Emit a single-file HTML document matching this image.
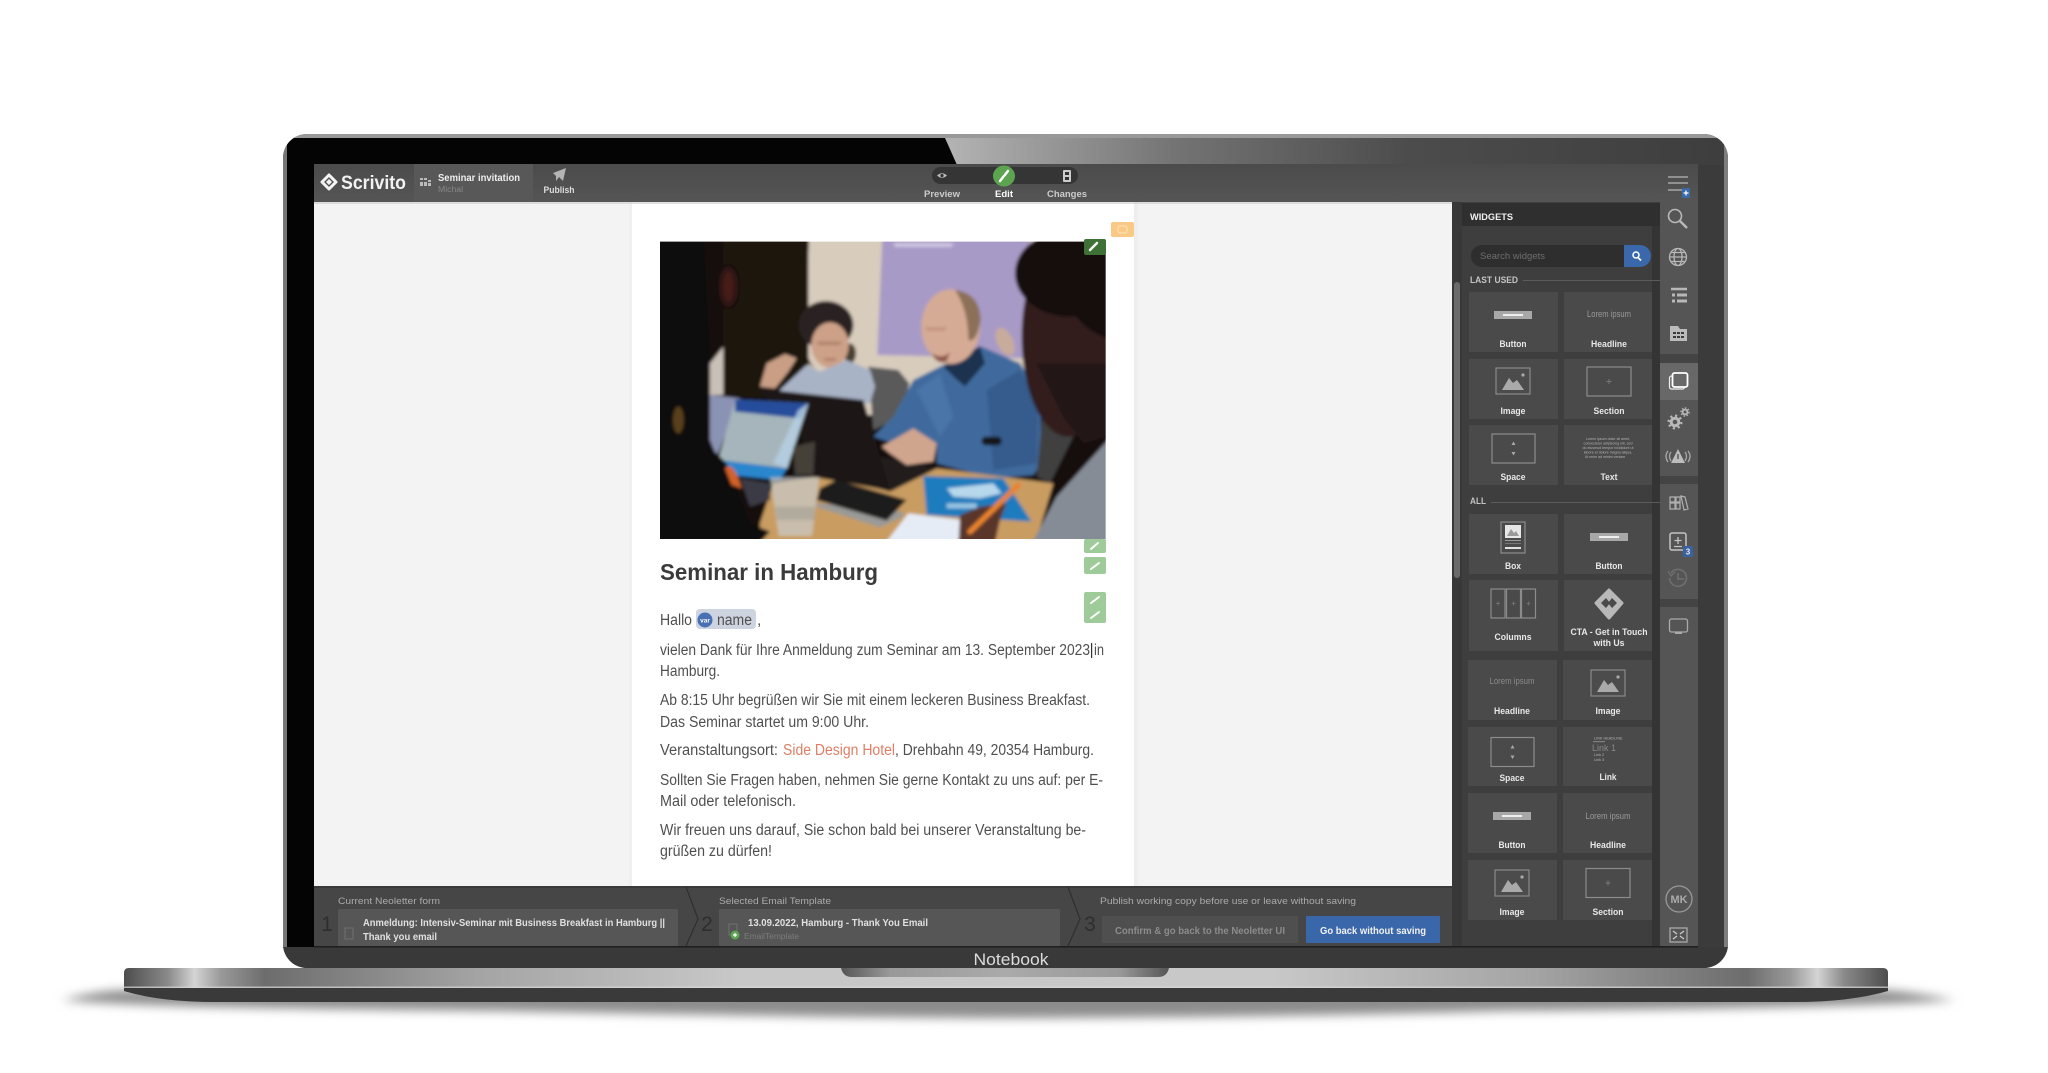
<!DOCTYPE html>
<html><head><meta charset="utf-8"><title>Scrivito Notebook</title>
<style>html,body{margin:0;padding:0;background:#fff;width:2048px;height:1073px;overflow:hidden}svg{display:block}text{font-family:"Liberation Sans",sans-serif}</style></head>
<body>
<svg width="2048" height="1073" viewBox="0 0 2048 1073" xmlns="http://www.w3.org/2000/svg">
<defs>
<linearGradient id="base" x1="124" x2="1888" y1="0" y2="0" gradientUnits="userSpaceOnUse">
<stop offset="0" stop-color="#4d4d4d"/><stop offset=".025" stop-color="#8a8a8a"/><stop offset=".04" stop-color="#d4d4d4"/><stop offset=".055" stop-color="#999"/><stop offset=".08" stop-color="#6d6d6d"/><stop offset=".2" stop-color="#a4a4a4"/><stop offset=".35" stop-color="#c8c8c8"/><stop offset=".65" stop-color="#c8c8c8"/><stop offset=".8" stop-color="#a4a4a4"/><stop offset=".92" stop-color="#6d6d6d"/><stop offset=".945" stop-color="#999"/><stop offset=".96" stop-color="#d4d4d4"/><stop offset=".975" stop-color="#8a8a8a"/><stop offset="1" stop-color="#4d4d4d"/>
</linearGradient>
<linearGradient id="gloss" x1="945" x2="1720" y1="0" y2="0" gradientUnits="userSpaceOnUse"><stop offset="0" stop-color="#b4b4b4"/><stop offset=".3" stop-color="#737373"/><stop offset=".6" stop-color="#4c4c4c"/><stop offset="1" stop-color="#3e3e3e"/></linearGradient>
<linearGradient id="notch" x1="841" x2="1169" y1="0" y2="0" gradientUnits="userSpaceOnUse"><stop offset="0" stop-color="#555"/><stop offset=".15" stop-color="#999"/><stop offset=".5" stop-color="#aaa"/><stop offset=".85" stop-color="#999"/><stop offset="1" stop-color="#555"/></linearGradient>
<linearGradient id="tb" x1="0" x2="0" y1="0" y2="1"><stop offset="0" stop-color="#4b4b4b"/><stop offset="1" stop-color="#555"/></linearGradient>
<filter id="b4" x="-10%" y="-80%" width="120%" height="360%"><feGaussianBlur stdDeviation="5"/></filter>
<filter id="soft" x="-5%" y="-5%" width="110%" height="110%"><feGaussianBlur stdDeviation="5"/></filter>
<filter id="soft8" x="-30%" y="-30%" width="160%" height="160%"><feGaussianBlur stdDeviation="9"/></filter>
<filter id="txt"><feGaussianBlur stdDeviation=".3"/></filter>
<clipPath id="ph"><rect x="0" y="35" width="1337" height="892"/></clipPath>
<clipPath id="lid"><rect x="283" y="134" width="1445" height="834" rx="24"/></clipPath>

<g id="iBtn"><rect x="-19" y="-4" width="38" height="8" fill="#a8a8a8"/><rect x="-10" y="-1" width="20" height="2" fill="#eee"/></g>
<g id="iImg"><rect x="-17" y="-13" width="34" height="26" fill="#4c4c4c" stroke="#8a8a8a" stroke-width="1.2"/><path d="M-11 9 L-4 -3 L0 2 L4 -1 L11 9Z" fill="#aaa"/><circle cx="10" cy="-6" r="1.6" fill="#aaa"/></g>
<g id="iSec"><rect x="-22" y="-14.500" width="44" height="29" fill="none" stroke="#8c8c8c" stroke-width="1.2"/><path d="M-2.500 0H2.500M0 -2.500V2.500" stroke="#777" stroke-width="1"/></g>
<g id="iSpc"><rect x="-21.500" y="-14.500" width="43" height="29" fill="none" stroke="#8c8c8c" stroke-width="1.2"/><path d="M0 -7 L-2 -3.500H2ZM0 7 L-2 3.500H2Z" fill="#aaa"/></g>
</defs>

<rect width="2048" height="1073" fill="#fff"/>

<!-- ground shadow -->
<path d="M62 1000 Q140 1008 500 1011 Q800 1017 1006 1018 Q1300 1017 1500 1011 Q1870 1008 1955 1000 Q1900 990 1880 990 H130 Q100 990 62 1000Z" fill="#8c8c8c" filter="url(#b4)"/>

<!-- base -->
<path d="M124 973 Q124 968 129 968 H1883 Q1888 968 1888 973 V988 H124Z" fill="url(#base)"/>
<rect x="124" y="986.500" width="1764" height="1.500" fill="#d8d8d8" opacity=".7"/>
<path d="M124 988 H1888 V991 Q1850 1002 1795 1002 H215 Q160 1002 124 991Z" fill="#3a3a3a"/>
<path d="M841 968 H1169 Q1167 977 1158 977 H852 Q843 977 841 968Z" fill="url(#notch)"/>

<!-- lid -->
<rect x="283" y="134" width="1445" height="834" rx="24" fill="#3b3b3b"/>
<g clip-path="url(#lid)">
<rect x="283" y="134" width="1445" height="4" fill="#999"/>
<rect x="283" y="134" width="4" height="834" fill="#777"/>
<rect x="1724" y="134" width="4" height="834" fill="#7d7d7d"/>
<rect x="945" y="138" width="779" height="27" fill="url(#gloss)"/>
<path d="M287 138 H945 L957 165 H314 V947 H287Z" fill="#040404"/>
<rect x="283" y="947" width="1445" height="21" fill="#393939"/>
</g>

<!-- page -->
<rect x="314" y="202" width="1138" height="685" fill="#f3f3f3"/>
<rect x="632" y="202" width="502" height="685" fill="#fff"/>
<rect x="629" y="202" width="3" height="685" fill="#efefef"/>
<rect x="1134" y="202" width="4" height="685" fill="#eeeeee"/>

<!-- orange / green tags -->
<rect x="1111" y="222" width="23" height="15" rx="2" fill="#f9c986"/>
<rect x="1118" y="226" width="9" height="7" rx="2" fill="none" stroke="#fde2b8" stroke-width="1"/>

<!-- photo -->
<g clip-path="url(#ph)" transform="translate(660,230) scale(.33333)">
<g filter="url(#soft)">
<rect x="-40" y="0" width="1420" height="970" fill="#140f0e"/>
<rect x="445" y="0" width="700" height="555" fill="#d8ccbd"/>
<path d="M668 0 H1110 V385 L652 375Z" fill="#a89ac6"/>
<path d="M190 0 H448 L440 220 L440 500 H190Z" fill="#1a1211"/>
<ellipse cx="205" cy="170" rx="22" ry="55" fill="#4a1f18" filter="url(#soft8)"/>
<path d="M150 400 L190 350 V495 H150Z" fill="#c9c0b8"/>
<!-- chair -->
<path d="M625 410 L715 420 L748 460 L725 560 L640 600Z" fill="#5a5a5a"/>
<!-- woman -->
<ellipse cx="498" cy="285" rx="82" ry="72" fill="#2a2320"/>
<path d="M425 300 Q440 400 470 420 L445 400Z" fill="#2a2320"/>
<ellipse cx="570" cy="370" rx="18" ry="30" fill="#4a4033"/>
<ellipse cx="510" cy="345" rx="56" ry="68" fill="#cda188"/>
<path d="M470 335 H545 L540 345 H475Z" fill="#8a5f4a" opacity=".45"/>
<path d="M490 385 H530 L525 392 H495Z" fill="#8e5a48" opacity=".6"/>
<path d="M360 480 L440 405 L480 425 L560 390 L630 420 L645 470 L630 520 H370Z" fill="#a9b3c6"/>
<path d="M300 470 L320 400 L375 372 L410 385 L385 425 L345 475Z" fill="#c99e85"/>
<!-- man shirt -->
<path d="M640 620 L700 560 L760 450 L850 405 L965 350 L1080 400 L1140 500 L1145 700 L1120 735 L1000 745 L830 700 L830 640 L700 640Z" fill="#406a9d"/>
<path d="M770 480 L840 430 L880 560 L840 620Z" fill="#4f7aac" opacity=".7"/>
<path d="M980 480 L1080 420 L1135 520 L1130 700 L1000 720Z" fill="#365b8c"/>
<path d="M850 410 L960 348 L975 400 L915 470 L880 440Z" fill="#1d3050"/>
<rect x="965" y="620" width="60" height="26" rx="12" fill="#13161c"/>
<!-- man head -->
<ellipse cx="872" cy="290" rx="88" ry="112" fill="#d6ab95"/>
<path d="M885 180 Q960 190 962 270 Q950 340 925 330 Q925 240 885 180Z" fill="#8c7058"/>
<path d="M795 292 H860 L855 302 H800Z" fill="#a87a62" opacity=".5"/>
<path d="M815 370 Q850 390 870 365 L860 395 Q830 405 815 370Z" fill="#8e5a48"/>
<ellipse cx="1035" cy="335" rx="24" ry="45" fill="#c7ab9b" transform="rotate(-25 1035 335)"/>
<!-- table -->
<path d="M300 880 L340 760 L500 735 L690 785 L830 715 L1180 760 L1120 960 H300Z" fill="#c99c62"/>
<!-- keyboard -->
<path d="M660 680 L830 715 L690 785Z" fill="#201f1f"/>
<!-- hand -->
<path d="M665 650 L760 595 L830 640 L820 695 L740 705 L690 670Z" fill="#d0a58e"/>
<!-- black laptop -->
<path d="M290 475 L610 510 L690 782 L455 740 L420 600Z" fill="#1a1919"/>
<!-- tablet -->
<path d="M150 495 L240 505 L170 680 L150 630Z" fill="#8b93b4"/>
<path d="M225 508 L445 520 L382 715 L175 690Z" fill="#a5b5bb"/>
<path d="M225 508 L445 520 L420 565 L225 545Z" fill="#254d9b"/>
<path d="M415 540 L445 520 L380 715 L340 700 Z" fill="#b7d1e6" opacity=".8"/>
<path d="M175 690 L380 715 L360 750 L210 735Z" fill="#2b86cd"/>
<path d="M240 745 L330 760 L330 810 L270 830Z" fill="#3a3a44"/>
<!-- glass -->
<path d="M400 650 L465 635 L460 735 L405 735Z" fill="#444038"/>
<!-- power strip -->
<path d="M470 820 L725 845 L730 860 L660 892 L468 830Z" fill="#9a9a98"/>
<path d="M480 775 L530 750 L740 810 L680 872 L470 810Z" fill="#1e1e1f"/>
<path d="M330 742 L478 742 L456 918 L356 918Z" fill="#c9cccb" opacity=".72"/>
<path d="M345 830 H465 V870 H350Z" fill="#8f8f86" opacity=".4"/>
<!-- notebook -->
<path d="M790 738 L1030 745 L1115 875 L800 855Z" fill="#1c7bbd"/>
<path d="M860 775 L1000 760 L1025 790 L960 805 L880 800Z" fill="#b7d8ec"/>
<path d="M860 820 H950 V835 H860Z" fill="#d0e6f3" opacity=".7"/>
<!-- paper -->
<path d="M660 960 L745 850 L905 870 L890 960Z" fill="#e6ecf6"/>
<!-- right person -->
<path d="M1105 960 L1190 800 L1380 590 V960Z" fill="#868c96"/>
<path d="M1130 740 L1150 520 L1240 620 L1170 760Z" fill="#3f3f3f"/>
<ellipse cx="1225" cy="320" rx="140" ry="300" fill="#311e1b"/>
<path d="M1380 610 L1270 640 L1210 560 L1130 400 L1380 400Z" fill="#241614"/>
<ellipse cx="1230" cy="130" rx="165" ry="130" fill="#131010"/>
<path d="M1240 0 H1380 V340 Q1260 300 1240 240Z" fill="#131010"/>
<!-- hand + pen -->
<path d="M895 960 L900 855 L960 830 L1040 820 L1020 870 L1000 960Z" fill="#5a3629"/>
<path d="M1075 765 L930 905" stroke="#e8832f" stroke-width="16" stroke-linecap="round"/>
<!-- foreground left -->
<path d="M-40 0 H130 L150 400 L140 640 L200 700 L270 880 L330 905 L280 960 H-40Z" fill="#0c0a0a"/>
<ellipse cx="55" cy="570" rx="16" ry="40" fill="#6e4d22" opacity=".8"/>
<path d="M195 715 Q215 695 235 745 L245 775 L215 765Z" fill="#d2622c"/>
<path d="M700 40 H880 L875 50 H705Z" fill="#e0dcef" opacity=".8"/>
</g>
</g>
<rect x="1084" y="239" width="22" height="16" rx="2" fill="#3f7035"/>
<path d="M1090 250 L1097 243" stroke="#f4f4f4" stroke-width="2.500" stroke-linecap="round"/>
<rect x="1084" y="539" width="22" height="14" rx="2" fill="#9ecb99"/>
<path d="M1091 549 L1098 543" stroke="#fff" stroke-width="2" stroke-linecap="round"/>
<rect x="1084" y="557" width="22" height="17" rx="2" fill="#9ecb99"/>
<path d="M1091 569 L1099 563" stroke="#fff" stroke-width="2" stroke-linecap="round"/>
<rect x="1084" y="592" width="22" height="31" rx="2" fill="#9ecb99"/>
<path d="M1091 603 L1099 597M1091 618 L1099 612" stroke="#fff" stroke-width="2" stroke-linecap="round"/>

<!-- content -->
<g fill="#505050" font-size="15.500" filter="url(#txt)">
<text x="660" y="580" font-size="23" font-weight="bold" fill="#3a3a3a" textLength="218" lengthAdjust="spacingAndGlyphs">Seminar in Hamburg</text>
<text x="660" y="625" textLength="32" lengthAdjust="spacingAndGlyphs">Hallo</text>
<rect x="696" y="609" width="60" height="20" rx="4" fill="#cdd4e0"/>
<circle cx="705" cy="620" r="7.500" fill="#4a6fb3"/>
<text x="705" y="622.500" font-size="6.500" font-weight="bold" fill="#fff" text-anchor="middle">var</text>
<text x="717" y="625" textLength="35" lengthAdjust="spacingAndGlyphs">name</text>
<text x="757" y="625">,</text>
<text x="660" y="655" textLength="430" lengthAdjust="spacingAndGlyphs">vielen Dank für Ihre Anmeldung zum Seminar am 13. September 2023</text>
<rect x="1091" y="643" width="1.200" height="15" fill="#333"/>
<text x="1094" y="655" textLength="10" lengthAdjust="spacingAndGlyphs">in</text>
<text x="660" y="676" textLength="60" lengthAdjust="spacingAndGlyphs">Hamburg.</text>
<text x="660" y="705" textLength="430" lengthAdjust="spacingAndGlyphs">Ab 8:15 Uhr begrüßen wir Sie mit einem leckeren Business Breakfast.</text>
<text x="660" y="727" textLength="209" lengthAdjust="spacingAndGlyphs">Das Seminar startet um 9:00 Uhr.</text>
<text x="660" y="755" textLength="118" lengthAdjust="spacingAndGlyphs">Veranstaltungsort:</text>
<text x="783" y="755" fill="#dd7f66" textLength="112" lengthAdjust="spacingAndGlyphs">Side Design Hotel</text>
<text x="895" y="755" textLength="199" lengthAdjust="spacingAndGlyphs">, Drehbahn 49, 20354 Hamburg.</text>
<text x="660" y="785" textLength="443" lengthAdjust="spacingAndGlyphs">Sollten Sie Fragen haben, nehmen Sie gerne Kontakt zu uns auf: per E-</text>
<text x="660" y="806" textLength="136" lengthAdjust="spacingAndGlyphs">Mail oder telefonisch.</text>
<text x="660" y="835" textLength="426" lengthAdjust="spacingAndGlyphs">Wir freuen uns darauf, Sie schon bald bei unserer Veranstaltung be-</text>
<text x="660" y="856" textLength="112" lengthAdjust="spacingAndGlyphs">grüßen zu dürfen!</text>
</g>

<!-- toolbar -->
<rect x="314" y="164" width="1384" height="38" fill="url(#tb)"/>
<rect x="414" y="164" width="119" height="38" fill="#585858"/>
<rect x="314" y="202" width="1138" height="2" fill="#ccc" opacity=".6"/>
<g fill="#f2f2f2">
<path d="M329 175 L336 182 L329 189 L322 182Z" fill="none" stroke="#f4f4f4" stroke-width="3" stroke-linejoin="round"/>
<path d="M326 182 L329 179 L332 182 L329 185Z" fill="#f4f4f4"/>
<text x="341" y="189" font-size="19" font-weight="bold" textLength="65" lengthAdjust="spacingAndGlyphs">Scrivito</text>
<text x="438" y="181" font-size="10" font-weight="bold" fill="#eee" textLength="82" lengthAdjust="spacingAndGlyphs">Seminar invitation</text>
<text x="438" y="192" font-size="8" fill="#888" textLength="25" lengthAdjust="spacingAndGlyphs">Michal</text>
<path d="M420 178h3v2h-3zM424 178h3v2h-3zM420 182h3v4h-3zM424 182h3v4h-3zM428 180h3v2h-3zM428 183h3v3h-3z" fill="#bbb"/>
<path d="M553 173 L566 168 L563 181 L559 177 L556 181 L556 176Z" fill="#b4b4b4"/>
<text x="559" y="193" font-size="9.500" font-weight="bold" fill="#ddd" text-anchor="middle" textLength="31" lengthAdjust="spacingAndGlyphs">Publish</text>
<rect x="932" y="167" width="146" height="17" rx="8.500" fill="#353535"/>
<path d="M937 175.500 Q942 171 947 175.500 Q942 180 937 175.500Z" fill="#bbb"/><circle cx="942" cy="175.500" r="1.600" fill="#333"/>
<ellipse cx="1004" cy="176" rx="11" ry="10.500" fill="#5da451"/>
<path d="M1000 181 L1008 171" stroke="#fff" stroke-width="2.500" stroke-linecap="round"/>
<rect x="1063" y="170" width="8" height="12" rx="1" fill="#ccc"/><rect x="1065" y="172" width="4" height="3" fill="#333"/><rect x="1065" y="177" width="4" height="3" fill="#333"/>
<text x="942" y="197" font-size="9.500" font-weight="bold" fill="#ccc" text-anchor="middle" textLength="36" lengthAdjust="spacingAndGlyphs">Preview</text>
<text x="1004" y="197" font-size="9.500" font-weight="bold" fill="#fff" text-anchor="middle" textLength="18" lengthAdjust="spacingAndGlyphs">Edit</text>
<text x="1067" y="197" font-size="9.500" font-weight="bold" fill="#ccc" text-anchor="middle" textLength="40" lengthAdjust="spacingAndGlyphs">Changes</text>
</g>

<!-- widget panel -->
<rect x="1452" y="202" width="208" height="745" fill="#3e3e3e"/>
<rect x="1452" y="202" width="10" height="745" fill="#383838"/>
<rect x="1454" y="282" width="6" height="296" rx="3" fill="#6a6a6a"/>
<rect x="1462" y="203" width="198" height="23" fill="#2f2f2f"/>
<rect x="1652" y="226" width="8" height="721" fill="#343434"/>
<text x="1470" y="220" font-size="9.500" font-weight="bold" fill="#f0f0f0" textLength="43" lengthAdjust="spacingAndGlyphs">WIDGETS</text>
<rect x="1471" y="245" width="180" height="22" rx="11" fill="#2e2e2e"/>
<path d="M1624 245 H1640 A11 11 0 0 1 1640 267 H1624Z" fill="#3b68ab"/>
<circle cx="1636" cy="255" r="3" fill="none" stroke="#fff" stroke-width="1.500"/><path d="M1638 257.500 L1641 260.500" stroke="#fff" stroke-width="1.800"/>
<text x="1480" y="259" font-size="9.500" fill="#6e6e6e" textLength="65" lengthAdjust="spacingAndGlyphs">Search widgets</text>
<text x="1470" y="283" font-size="9" font-weight="bold" fill="#c4c4c4" textLength="48" lengthAdjust="spacingAndGlyphs">LAST USED</text>
<rect x="1523" y="280" width="137" height="1" fill="#5c5c5c"/>
<text x="1470" y="504" font-size="9" font-weight="bold" fill="#c4c4c4" textLength="16" lengthAdjust="spacingAndGlyphs">ALL</text>
<rect x="1491" y="502" width="169" height="1" fill="#5c5c5c"/>

<g fill="#4a4a4a">
<rect x="1469" y="292" width="89" height="60"/><rect x="1564" y="292" width="88" height="60"/>
<rect x="1469" y="359" width="89" height="60"/><rect x="1564" y="359" width="88" height="60"/>
<rect x="1469" y="425" width="89" height="60"/><rect x="1564" y="425" width="88" height="60"/>
<rect x="1469" y="514" width="89" height="60"/><rect x="1564" y="514" width="88" height="60"/>
<rect x="1469" y="580" width="89" height="71"/><rect x="1564" y="580" width="88" height="71"/>
<rect x="1468" y="660" width="89" height="60"/><rect x="1563" y="660" width="89" height="60"/>
<rect x="1468" y="727" width="89" height="59"/><rect x="1563" y="727" width="89" height="59"/>
<rect x="1468" y="793" width="89" height="60"/><rect x="1563" y="793" width="89" height="60"/>
<rect x="1468" y="860" width="89" height="60"/><rect x="1563" y="860" width="89" height="60"/>
</g>

<!-- widget icons -->
<use href="#iBtn" x="1513" y="315"/>
<text x="1609" y="317" font-size="9.500" fill="#9a9a9a" text-anchor="middle" textLength="44" lengthAdjust="spacingAndGlyphs">Lorem ipsum</text>
<use href="#iImg" x="1513" y="381"/>
<use href="#iSec" x="1609" y="381.500"/>
<use href="#iSpc" x="1513.500" y="448.500"/>
<g font-size="3.600" fill="#b4b4b4" text-anchor="middle">
<text x="1608" y="440">Lorem ipsum dolor sit amet,</text>
<text x="1608" y="444.500">consectetur adipiscing elit, sed</text>
<text x="1608" y="449">do eiusmod tempor incididunt ut</text>
<text x="1608" y="453.500">labore et dolore magna aliqua.</text>
<text x="1605" y="458">Ut enim ad minim veniam</text>
</g>
<!-- box -->
<rect x="1501" y="522" width="24" height="31" fill="none" stroke="#8c8c8c" stroke-width="1.200"/>
<rect x="1505" y="525" width="16" height="13" fill="#e6e6e6"/><path d="M1507 536 L1511 529 L1514 533 L1516 531 L1519 536Z" fill="#999"/>
<rect x="1505" y="540" width="16" height="1" fill="#999"/><rect x="1505" y="543" width="16" height="1" fill="#777"/><rect x="1505" y="547" width="16" height="2" fill="#e0e0e0"/>
<use href="#iBtn" x="1609" y="537"/>
<!-- columns -->
<g fill="none" stroke="#8c8c8c" stroke-width="1.200"><rect x="1491" y="589" width="14" height="29"/><rect x="1506.500" y="589" width="14" height="29"/><rect x="1521.500" y="589" width="14" height="29"/></g>
<path d="M1496 603.500h4M1498 601.500v4M1511.500 603.500h4M1513.500 601.500v4M1526.500 603.500h4M1528.500 601.500v4" stroke="#777" stroke-width=".8"/>
<!-- CTA diamond -->
<path d="M1609 590 L1622 603 L1609 618 L1596 603Z" fill="#b8b8b8" stroke="#b8b8b8" stroke-width="3" stroke-linejoin="round"/>
<path d="M1601 603 L1606 598 L1610 603 L1606 608Z M1608 603 L1612 598 L1617 603 L1612 608Z" fill="#4a4a4a"/>
<text x="1512" y="684" font-size="9.500" fill="#8a8a8a" text-anchor="middle" textLength="45" lengthAdjust="spacingAndGlyphs">Lorem ipsum</text>
<use href="#iImg" x="1608" y="683"/>
<use href="#iSpc" x="1512.500" y="752"/>
<g fill="#b4b4b4" font-size="3.800"><text x="1594" y="739.500">LINK HEADLINE</text><rect x="1593" y="741.500" width="12" height=".6"/><text x="1592" y="751" font-size="9" fill="#888">Link 1</text><text x="1594" y="756">Link 2</text><text x="1594" y="761">Link 3</text></g>
<use href="#iBtn" x="1512" y="816"/>
<text x="1608" y="819" font-size="9.500" fill="#9a9a9a" text-anchor="middle" textLength="45" lengthAdjust="spacingAndGlyphs">Lorem ipsum</text>
<use href="#iImg" x="1512" y="883"/>
<use href="#iSec" x="1608" y="883"/>

<!-- widget labels -->
<g font-size="9.500" font-weight="bold" fill="#e8e8e8" text-anchor="middle">
<text x="1513" y="347" textLength="27" lengthAdjust="spacingAndGlyphs">Button</text>
<text x="1609" y="347" textLength="36" lengthAdjust="spacingAndGlyphs">Headline</text>
<text x="1513" y="414" textLength="25" lengthAdjust="spacingAndGlyphs">Image</text>
<text x="1609" y="414" textLength="31" lengthAdjust="spacingAndGlyphs">Section</text>
<text x="1513" y="480" textLength="25" lengthAdjust="spacingAndGlyphs">Space</text>
<text x="1609" y="480" textLength="17" lengthAdjust="spacingAndGlyphs">Text</text>
<text x="1513" y="569" textLength="16" lengthAdjust="spacingAndGlyphs">Box</text>
<text x="1609" y="569" textLength="27" lengthAdjust="spacingAndGlyphs">Button</text>
<text x="1513" y="640" textLength="37" lengthAdjust="spacingAndGlyphs">Columns</text>
<text x="1609" y="635" textLength="77" lengthAdjust="spacingAndGlyphs">CTA - Get in Touch</text>
<text x="1609" y="646" textLength="31" lengthAdjust="spacingAndGlyphs">with Us</text>
<text x="1512" y="714" textLength="36" lengthAdjust="spacingAndGlyphs">Headline</text>
<text x="1608" y="714" textLength="25" lengthAdjust="spacingAndGlyphs">Image</text>
<text x="1512" y="781" textLength="25" lengthAdjust="spacingAndGlyphs">Space</text>
<text x="1608" y="780" textLength="17" lengthAdjust="spacingAndGlyphs">Link</text>
<text x="1512" y="848" textLength="27" lengthAdjust="spacingAndGlyphs">Button</text>
<text x="1608" y="848" textLength="36" lengthAdjust="spacingAndGlyphs">Headline</text>
<text x="1512" y="915" textLength="25" lengthAdjust="spacingAndGlyphs">Image</text>
<text x="1608" y="915" textLength="31" lengthAdjust="spacingAndGlyphs">Section</text>
</g>

<!-- rail -->
<rect x="1660" y="202" width="38" height="745" fill="#555"/>
<rect x="1660" y="354" width="38" height="9" fill="#444"/>
<rect x="1660" y="363" width="38" height="37" fill="#686868"/>
<rect x="1660" y="476" width="38" height="8" fill="#444"/>
<rect x="1660" y="599" width="38" height="8" fill="#444"/>
<g fill="none" stroke="#b8b8b8" stroke-width="1.300">
<path d="M1668 177H1688M1668 183H1688M1668 190H1682"/>
<circle cx="1675" cy="216" r="6.500" stroke-width="1.600"/><path d="M1680 221 L1687 228" stroke-width="2.500"/>
<circle cx="1678" cy="257" r="8.500"/><ellipse cx="1678" cy="257" rx="4" ry="8.500"/><path d="M1669.500 257H1686.500M1671 252.500H1685M1671 261.500H1685"/>
<path d="M1671 289H1687" stroke-width="2.500"/><path d="M1672 295H1675M1677 295H1687M1672 301H1675M1677 301H1687" stroke-width="3"/>
<rect x="1669.500" y="376" width="15" height="13" rx="2" stroke="#eee" stroke-width="1.200"/>
<rect x="1672.500" y="373" width="15" height="14" rx="2" stroke="#fff" stroke-width="1.800" fill="#686868"/>
<path d="M1671 452 Q1668 456 1671 461M1668 451 Q1664 456 1668 462M1685 452 Q1688 456 1685 461M1688 451 Q1692 456 1688 462" stroke="#aaa"/>
<rect x="1670" y="533" width="16" height="17" rx="2" stroke="#c4c4c4" stroke-width="1.500"/>
<path d="M1678 537V544M1674.500 540.500H1681.500M1674 546.500H1682" stroke="#c4c4c4"/>
<path d="M1671 573 A8.500 8.500 0 1 1 1669.500 578" stroke="#707070" stroke-width="1.500"/><path d="M1668 571 L1671 576 L1675 572" stroke="#707070" stroke-width="1.200"/><path d="M1678 573V579H1684" stroke="#707070" stroke-width="1.500"/>
<rect x="1669.500" y="619" width="18" height="13" rx="2" stroke="#aaa"/>
<circle cx="1679" cy="899" r="13" stroke="#999"/>
<rect x="1670" y="928" width="17" height="14" stroke="#aaa"/><path d="M1673 931 L1677 934M1684 931 L1680 934M1673 939 L1677 936M1684 939 L1680 936" stroke="#ccc"/>
</g>
<rect x="1675" y="632" width="7" height="2" fill="#aaa"/>
<rect x="1682" y="188" width="8" height="10" rx="1" fill="#3a6aa8"/><path d="M1686 190.500V195.500M1683.500 193H1688.500" stroke="#fff" stroke-width="1.200"/>
<path d="M1670 329 V326 H1678 L1680 329 H1687 V341 H1670Z" fill="#bbb"/>
<path d="M1673 332h3v2h-3zM1677 332h3v2h-3zM1681 332h3v2h-3zM1673 336h3v2h-3zM1677 336h3v2h-3zM1681 336h3v2h-3z" fill="#3a3a3a"/>
<circle cx="1675" cy="422" r="3.800" fill="none" stroke="#b8b8b8" stroke-width="3"/>
<circle cx="1675" cy="422" r="6.400" fill="none" stroke="#b8b8b8" stroke-width="2.200" stroke-dasharray="2.200 2.800"/>
<circle cx="1685" cy="412" r="2.400" fill="none" stroke="#b8b8b8" stroke-width="1.800"/>
<circle cx="1685" cy="412" r="4" fill="none" stroke="#b8b8b8" stroke-width="1.400" stroke-dasharray="1.500 1.600"/>
<path d="M1678 449 L1685 463 H1671Z" fill="#bcbcbc"/><rect x="1677.400" y="454" width="1.200" height="5" fill="#444"/>
<path d="M1670 497h5v5h-5zM1676 497h4v5h-4zM1681 496l4 1 3 12-4 1z M1670 503h5v6h-5zM1676 503h4v6h-4z" fill="none" stroke="#b0b0b0" stroke-width="1.200"/>
<rect x="1683" y="546" width="10" height="11" rx="1.500" fill="#3a62a0"/>
<text x="1688" y="554.500" font-size="8" font-weight="bold" fill="#e8e8e8" text-anchor="middle">3</text>
<text x="1679" y="903" font-size="11" fill="#aaa" text-anchor="middle" font-weight="bold" textLength="17" lengthAdjust="spacingAndGlyphs">MK</text>

<!-- footer -->
<rect x="314" y="887" width="1138" height="59" fill="#464646"/>
<rect x="314" y="886" width="1138" height="2" fill="#3a3a3a"/>
<path d="M686 887 L698 919 L686 946M1068 887 L1080 919 L1068 946" fill="none" stroke="#2f2f2f" stroke-width="1.200"/>
<rect x="338" y="909" width="340" height="37" rx="1" fill="#565656"/>
<rect x="719" y="909" width="341" height="37" rx="1" fill="#565656"/>
<rect x="1102" y="916" width="196" height="27" rx="1" fill="#4f4f4f"/>
<rect x="1306" y="916" width="134" height="27" rx="1" fill="#3a67a9"/>
<g fill="#2e2e2e" font-size="21" text-anchor="middle"><text x="327" y="931">1</text><text x="707" y="931">2</text><text x="1090" y="931">3</text></g>
<rect x="345" y="928" width="8" height="11" fill="none" stroke="#707070"/>
<rect x="729" y="924" width="8" height="11" fill="none" stroke="#707070"/>
<circle cx="735" cy="935" r="4.500" fill="#5ea452"/><path d="M733 935H737M735 933V937" stroke="#fff" stroke-width="1.200"/>
<g font-size="9.500" fill="#ababab">
<text x="338" y="904" textLength="102" lengthAdjust="spacingAndGlyphs">Current Neoletter form</text>
<text x="719" y="904" textLength="112" lengthAdjust="spacingAndGlyphs">Selected Email Template</text>
<text x="1100" y="904" textLength="256" lengthAdjust="spacingAndGlyphs">Publish working copy before use or leave without saving</text>
<text x="363" y="926" font-size="10" font-weight="bold" fill="#e0e0e0" textLength="302" lengthAdjust="spacingAndGlyphs">Anmeldung: Intensiv-Seminar mit Business Breakfast in Hamburg ||</text>
<text x="363" y="940" font-size="10" font-weight="bold" fill="#e0e0e0" textLength="74" lengthAdjust="spacingAndGlyphs">Thank you email</text>
<text x="748" y="926" font-size="10" font-weight="bold" fill="#e0e0e0" textLength="180" lengthAdjust="spacingAndGlyphs">13.09.2022, Hamburg - Thank You Email</text>
<text x="744" y="939" font-size="8" fill="#7c7c7c" textLength="55" lengthAdjust="spacingAndGlyphs">EmailTemplate</text>
<text x="1115" y="934" font-size="10" font-weight="bold" fill="#8c8c8c" textLength="170" lengthAdjust="spacingAndGlyphs">Confirm &amp; go back to the Neoletter UI</text>
<text x="1320" y="934" font-size="10" font-weight="bold" fill="#f0f0f0" textLength="106" lengthAdjust="spacingAndGlyphs">Go back without saving</text>
</g>
<rect x="314" y="946" width="1384" height="1.500" fill="#1e1e1e"/>
<text x="1011" y="965" font-size="17" fill="#dcdcdc" text-anchor="middle" textLength="75" lengthAdjust="spacingAndGlyphs">Notebook</text>
</svg>
</body></html>
